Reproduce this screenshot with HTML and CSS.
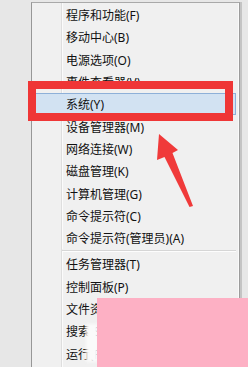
FILE: index.html
```html
<!DOCTYPE html>
<html>
<head>
  <meta charset="utf-8">
  <title>右键菜单</title>
  <link rel="stylesheet" href="styles.css">
</head>
<body>
  <div class="desk">
    <div class="menu">
      <div class="item">程序和功能(F)</div>
      <div class="item">移动中心(B)</div>
      <div class="item">电源选项(O)</div>
      <div class="item">事件查看器(V)</div>
      <div class="item active">系统(Y)</div>
      <div class="item">设备管理器(M)</div>
      <div class="item">网络连接(W)</div>
      <div class="item">磁盘管理(K)</div>
      <div class="item">计算机管理(G)</div>
      <div class="item">命令提示符(C)</div>
      <div class="item">命令提示符(管理员)(A)</div>
      <div class="sep"></div>
      <div class="item">任务管理器(T)</div>
      <div class="item">控制面板(P)</div>
      <div class="item">文件资源管理器(E)</div>
      <div class="item">搜索(S)</div>
      <div class="item">运行(R)</div>
    </div>

    <!-- 标注 -->
    <div class="mark-box"></div>
    <svg class="mark-arrow" width="248" height="367" viewBox="0 0 248 367">
      <path d="M159 134 L178 150 L172.5 153 L193 206 L189.5 207 L164.5 157 L157 160 Z" fill="#f03a3a"/>
    </svg>
    <div class="smudge"></div>
    <div class="cover"></div>
  </div>
</body>
</html>
```

FILE: styles.css
```css
html, body {
  margin: 0;
  height: 100%;
  overflow: hidden;
}
body {
  background-color: #e7e7e7;
  font-family: "Segoe UI", "Noto Sans", "Noto Sans CJK SC", sans-serif;
}
.desk {
  position: relative;
  height: 100%;
  padding: 2px 0 0 31px;
  box-sizing: border-box;
  overflow: hidden;
}
.menu {
  width: 209px;
  height: 365px;
  box-sizing: border-box;
  padding-top: 1px;
  border-left: 1px solid #979797;
  border-top: 1px solid #a9a9a9;
  border-right: 1px solid #9c9c9c;
  box-shadow: inset -1px 0 0 #fafafa, 2px 0 0 #c4c4c4;
  background: linear-gradient(to right, transparent 29px, #dedede 29px, #dedede 30px, #fbfbfb 30px, #fbfbfb 31px, transparent 31px), #f0f0f0;
}
.item {
  height: 22.3px;
  display: flex;
  align-items: center;
  padding-left: 34px;
  font-size: 12px;
  color: #111;
  box-sizing: border-box;
}
.item.active {
  margin: 0 3px 0 1px;
  padding-left: 32px;
  background-color: #d2e2f2;
  border: 1px solid #8eb0d8;
}
.sep {
  height: 4px;
  margin-left: 30px;
  margin-right: 3px;
  box-sizing: border-box;
  border-top: 1px solid #f0f0f0;
  background: linear-gradient(#d6d6d6 0, #d6d6d6 1px, #fdfdfd 1px, #fdfdfd 2px, transparent 2px);
}
.mark-box {
  position: absolute;
  left: 28px;
  top: 81px;
  width: 205px;
  height: 40px;
  box-sizing: border-box;
  border: 8px solid #ef3636;
}
.mark-arrow {
  position: absolute;
  left: 0;
  top: 0;
}
.smudge {
  position: absolute;
  left: 86px;
  top: 324px;
  width: 12px;
  height: 38px;
  background-color: #fafafa;
  filter: blur(1.5px);
}
.cover {
  position: absolute;
  left: 97px;
  top: 298px;
  right: 0;
  bottom: 0;
  background-color: #fdb0c4;
}
```
